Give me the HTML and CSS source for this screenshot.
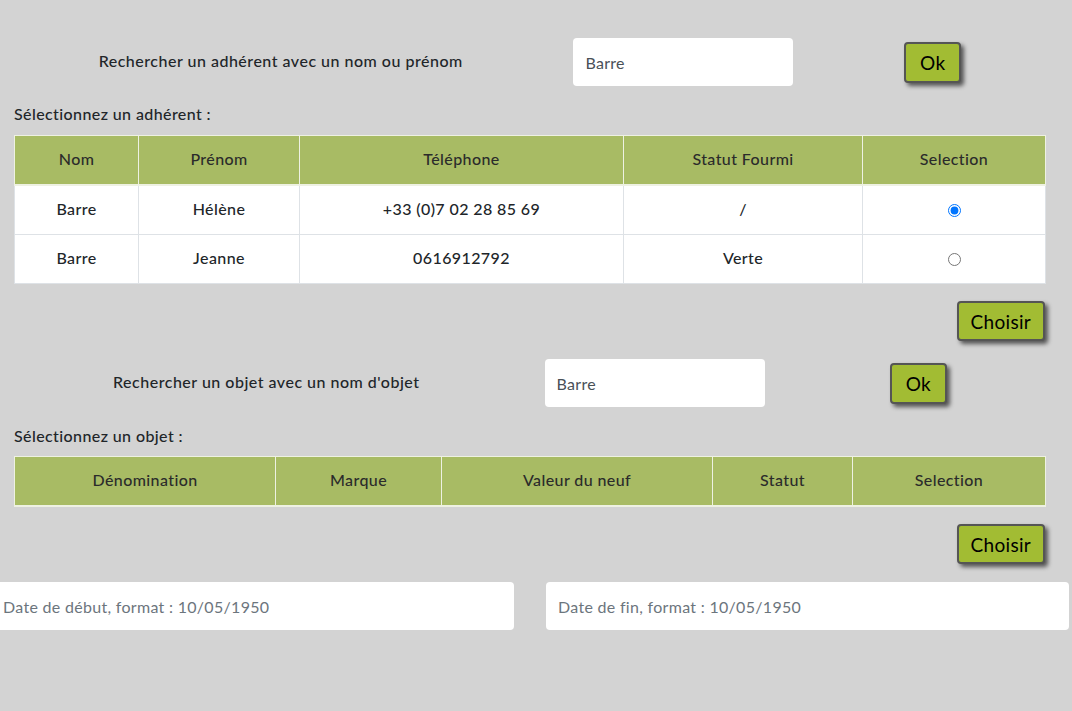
FILE: index.html
```html
<!DOCTYPE html>
<html lang="fr">
<head>
<meta charset="utf-8">
<title>Emprunt</title>
<link rel="stylesheet" href="styles.css">
</head>
<body>
<main class="page">
  <div class="search-row">
    <label class="search-label" for="q1">Rechercher un adhérent avec un nom ou prénom</label>
    <input id="q1" class="field" type="text" value="Barre">
    <button class="btn">Ok</button>
  </div>

  <section class="block">
    <p class="pick-label pick-first">Sélectionnez un adhérent :</p>
    <table class="grid">
      <colgroup>
        <col style="width:124px"><col style="width:161px"><col style="width:324px"><col style="width:239px"><col>
      </colgroup>
      <thead>
        <tr><th>Nom</th><th>Prénom</th><th>Téléphone</th><th>Statut Fourmi</th><th>Selection</th></tr>
      </thead>
      <tbody>
        <tr><td>Barre</td><td>Hélène</td><td>+33 (0)7 02 28 85 69</td><td>/</td><td><input class="radio" type="radio" name="adh" checked></td></tr>
        <tr><td>Barre</td><td>Jeanne</td><td>0616912792</td><td>Verte</td><td><input class="radio" type="radio" name="adh"></td></tr>
      </tbody>
    </table>
    <div class="actions"><button class="btn btn-wide">Choisir</button></div>
  </section>

  <div class="search-row">
    <label class="search-label" for="q2">Rechercher un objet avec un nom d'objet</label>
    <input id="q2" class="field" type="text" value="Barre">
    <button class="btn">Ok</button>
  </div>

  <section class="block">
    <p class="pick-label pick-second">Sélectionnez un objet :</p>
    <table class="grid">
      <colgroup>
        <col style="width:261px"><col style="width:166px"><col style="width:271px"><col style="width:140px"><col>
      </colgroup>
      <thead>
        <tr><th>Dénomination</th><th>Marque</th><th>Valeur du neuf</th><th>Statut</th><th>Selection</th></tr>
      </thead>
    </table>
    <div class="actions"><button class="btn btn-wide">Choisir</button></div>
  </section>

  <div class="dates">
    <input class="field date" type="text" placeholder="Date de début, format : 10/05/1950">
    <input class="field date" type="text" placeholder="Date de fin, format : 10/05/1950">
  </div>
</main>
</body>
</html>
```

FILE: styles.css
```css
* { box-sizing: border-box; }

html, body {
  margin: 0;
  background: #d3d3d3;
}

body {
  font-family: Lato, "Noto Sans", sans-serif;
  font-size: 16px;
  letter-spacing: 0.4px;
  color: #212529;
  min-height: 711px;
}

.page {
  padding-top: 38px;
}

.search-row {
  display: flex;
  justify-content: space-evenly;
  align-items: center;
  margin-left: -12px;
}

.search-label {
  font-size: 16px;
  font-weight: 500;
  letter-spacing: 0.5px;
  color: #212529;
  margin-bottom: 3px;
}

.field {
  width: 220px;
  height: 48px;
  border: none;
  border-radius: 4px;
  background: #fff;
  padding: 0 12px;
  font-family: inherit;
  font-size: 16px;
  letter-spacing: 0.3px;
  color: #495057;
  outline: none;
}

.field::placeholder {
  color: #6c757d;
}

.btn {
  height: 41px;
  padding: 0 14px;
  background: #a2bc33;
  border: 2px solid #555;
  border-radius: 4px;
  box-shadow: 3px 3px 4px #555;
  font-family: inherit;
  font-size: 19px;
  letter-spacing: 0.3px;
  color: #000;
  cursor: pointer;
}

.btn-wide {
  height: 40px;
  padding: 0 12px;
}

.block {
  padding: 0 26px 0 14px;
}

.pick-label {
  margin: 0;
  line-height: 24px;
  font-weight: 500;
}

.pick-first {
  padding: 16px 0 9px;
}

.pick-second {
  padding: 17px 0 8px;
}

.grid {
  width: 100%;
  border-collapse: collapse;
  background: #fff;
  table-layout: fixed;
  border: 1px solid #dee2e6;
}

.grid th,
.grid td {
  padding: 11px 12px 13px;
  line-height: 24px;
  text-align: center;
  border: 1px solid #dee2e6;
  font-weight: 500;
  color: #212529;
}

.grid th {
  background: #a8bb64;
  color: #2b2b2b;
  border-color: #eef1e2;
  border-bottom: 2px solid #eef1e2;
}

.radio {
  margin: 0;
  width: 13px;
  height: 13px;
  vertical-align: middle;
}

.actions {
  display: flex;
  justify-content: flex-end;
  padding: 17px 1px 18px 0;
}

.dates {
  display: flex;
  gap: 32px;
  margin-left: -9px;
}

.date {
  width: 523px;
}
```
